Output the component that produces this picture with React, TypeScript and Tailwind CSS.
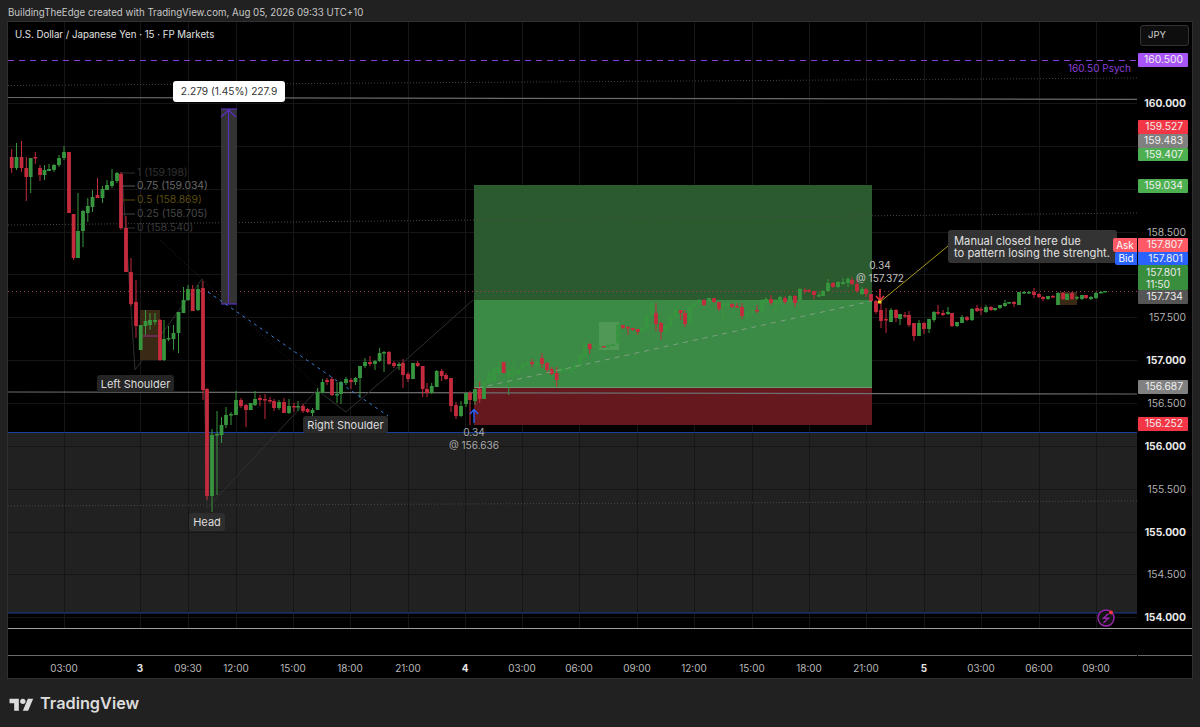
import React from "react";

// [colour 0 green / 1 red, x, bodyTop, bodyBottom, wickTop, wickBottom]
const candles: number[][] = [
  [1,11.7,157,168,149,173],[0,16.5,157,168,143,170],[1,21.5,157,168,141,172],[1,26.3,168,177,157,201],[0,30.7,158,177,158,193],[1,35.3,157,158,152,164],
  [1,40,168,175,165,181],[0,44.5,170,175,165,180],[0,49,169,171,164,171],[0,54,165,170,164,172],[0,59,158,165,155,167],[0,64,152,158,146,160],
  [1,69,152,213,152,213],[1,73.6,214,258,214,260],[0,78,231,258,193,258],[0,83,211,231,210,247],[0,87.8,206,213,198,222],[0,92.5,197,207,190,212],
  [1,97.5,195,198,178,198],[0,102.5,189,198,186,203],[0,107,185,190,180,190],[0,112,181,186,169,188],[0,117,173,181,172,183],[1,121,174,228,172,230],
  [1,126,228,272,216,272],[1,131,272,304,258,306],[1,136,302,326,280,338],[0,140.7,325,350,325,350],[0,145.5,321,326,310,335],[0,150,320,325,313,330],
  [0,155,320,322,313,325],[1,160,320,360,319,361],[0,164,339,360,320,361],[0,168.5,338,339,326,341],[0,173.5,333,339,325,350],[0,178.5,312,333,312,353],
  [0,183.5,300,313,287,313],[0,188,289,300,285,301],[1,192.7,289,311,285,311],[0,198,289,310,285,311],[1,203,288,390,281,400],[1,207,389,496,388,500],
  [0,212,435,496,429,512],[0,217,434,435,411,495],[0,221.5,425,435,417,443],[0,226,415,425,407,428],[0,231,414,415,412,425],[0,236,400,415,391,415],
  [1,241,400,406,398,408],[1,246,405,410,404,427],[0,250.7,403,410,403,410],[0,255,399,405,391,406],[1,260,398,400,395,406],[1,265,399,400,394,419],
  [1,270,400,401,397,403],[1,274,401,408,399,411],[0,279,402,408,400,410],[1,284,402,413,398,413],[0,289,406,413,399,414],[1,294,406,407,403,412],
  [0,298,406,407,401,411],[1,303,406,411,404,413],[1,307.6,409,412,408,413],[0,312.5,410,413,408,417],[0,317.6,392,410,388,410],[0,322.5,382,393,379,393],
  [1,327,380,382,378,385],[1,332,379,395,377,396],[0,337,394,395,382,403],[0,341,382,394,381,404],[0,346,379,383,377,385],[1,351,380,382,378,389],
  [0,355.5,378,382,377,385],[0,360,366,378,366,398],[0,365,362,366,358,368],[1,370,362,364,356,366],[0,375,361,364,360,370],[0,379.6,353,361,348,362],
  [0,384,352,353,351,372],[1,389,352,364,351,365],[1,394,363,366,361,368],[0,399,364,366,362,370],
  [1,403,363,375,359,388],[1,408,374,379,372,382],[0,413,363,379,363,379],[1,417.7,363,366,361,367],[1,422.7,366,389,366,397],[1,427,389,393,383,397],
  [0,431.7,386,393,383,394],[0,436.7,371,387,370,387],[1,441.7,371,376,369,381],[1,446,375,379,373,380],[1,451,378,406,378,412],[1,456,405,416,402,419],
  [0,461,406,416,401,417],[0,466,393,404,393,407],[1,470,393,400,391,425],[0,475,389,401,389,405],[1,479.7,389,399,382,403],[0,484,382,399,380,399],
  [0,489,373,383,371,384],[0,494,368,381,366,382],[0,499,367,373,357,375],[1,503.7,362,373,362,373],[0,508.7,370,377,370,395],[0,513,372,375,363,380],
  [0,518,370,374,369,375],[0,522.7,364,369,363,370],[0,527,363,365,362,366],[1,532,362,364,359,367],[0,537,362,366,361,367],[1,542,358,364,353,368],
  [1,547,363,370,362,373],[1,551.7,369,374,367,375],[1,556.7,373,380,367,387],[0,561.7,368,372,367,373],[0,565.7,369,371,368,372],[0,570.7,368,372,367,373],
  [0,575,364,369,363,370],[0,580,355,365,354,366],[0,585,344,357,343,358],[1,589.7,344,349,343,354],[0,594,345,347,344,348],[0,599,346,347,345,348],
  [1,603.7,346,347,346,347],[0,608,345,347,344,348],[0,613,344,346,343,347],[0,618,325,343,324,344],[1,623,325,328,325,329],[1,628,327,328,326,335],
  [1,632.7,328,330,328,331],[1,637.7,329,332,329,335],[0,642,328,332,326,333],[0,646.7,315,329,314,330],[0,651.7,303,315,302,316],[1,656,313,324,303,331],
  [1,661,323,332,322,340],[0,666,325,332,324,333],[0,670.7,317,326,316,327],[0,675.7,309,317,308,318],[1,680.7,310,313,310,320],[1,685,313,324,310,327],
  [0,690,307,324,306,325],[0,694,303,307,302,308],[0,699,300,303,299,304],[1,704,300,305,299,306],[0,709,298,302,298,303],[1,714,298,302,298,303],
  [1,719,302,309,302,311],[0,723,303,307,303,323],[0,728,304,306,303,307],[1,732,304,307,303,308],[1,737,306,307,303,308],[1,742,307,316,303,319],
  [0,747,313,316,312,317],[0,752,310,313,309,314],[1,757,310,311,305,313],[0,762,300,311,299,312],[0,766,299,303,297,305],[1,771,299,303,295,305],
  [0,776,300,304,299,313],[0,780,297,303,296,304],[1,785,298,302,296,304],[0,790,296,303,295,305],[1,795,296,303,295,307],[0,800,289,300,288,301],
  [1,805,290,291,288,294],[1,809,290,291,289,293],[1,814,291,295,291,299],[0,819,295,296,292,297],[0,823,291,296,290,296],[0,828,283,291,279,292],
  [1,833,283,287,282,288],[0,838,282,287,281,288],[0,843,282,284,278,285],[0,848,279,283,277,287],[1,852,280,284,277,285],[1,857,284,291,279,293],
  [0,862,289,294,287,295],[1,866,289,294,288,297],[1,871,294,301,294,302],[1,876,301,312,300,314],[1,881,310,321,303,328],[1,886,319,320,308,333],
  [0,891,310,322,308,322],[1,896,310,318,309,322],[0,900,314,319,314,325],[1,905,315,316,312,318],[1,909,315,325,311,327],[1,914,323,336,323,341],
  [0,919,323,336,320,336],[1,924,323,329,322,334],[0,929,319,329,319,333],[0,934,312,320,311,322],[1,938,312,313,305,315],[1,943,313,315,310,316],
  [0,948,312,314,307,315],[1,952,313,326,313,327],[0,957,322,326,322,327],[0,962,317,323,315,323],[1,967,317,320,316,321],[0,972,309,320,308,321],
  [1,977,308,311,305,312],[1,981,309,310,307,315],[0,986,307,312,305,313],[1,991,307,310,306,311],[0,995,308,310,308,311],[0,1000,305,308,305,309],
  [0,1005,303,306,300,307],[0,1009,302,303,302,304],[1,1014,302,304,301,307],[0,1019,292,305,292,305],[0,1024,292,293,291,294],[0,1029,292,293,291,294],
  [1,1034,292,295,288,298],[1,1039,294,297,293,298],[1,1043,297,299,296,301],[0,1048,296,299,296,300],[1,1053,296,297,295,298],[0,1058,293,305,292,305],
  [1,1063,293,299,292,300],[0,1067,294,300,293,300],[1,1072,293,299,292,300],[0,1077,297,298,296,300],[0,1082,295,299,295,300],[1,1086,295,298,295,299],
  [0,1091,297,299,296,300],[0,1096,293,298,292,299],[0,1101,292,293,291,293],[0,1105,291,292,291,292],
];

const gridX = [64,140,188,236,293,350,408,465,522,579,637,694,752,809,866,924,981,1039,1096];
const gridY = [103.5,146.5,189.5,232.5,274.5,317.5,360.5,403.5,446.5,489.5,532.5,574.5,617.5];

const axisTicks = [
  { t: "160.000", y: 102.5, b: true },{ t: "158.500", y: 231.5 },{ t: "157.500", y: 316.5 },{ t: "157.000", y: 359.5, b: true },
  { t: "156.500", y: 402.5 },{ t: "156.000", y: 445.5, b: true },{ t: "155.500", y: 488.5 },{ t: "155.000", y: 531.5, b: true },
  { t: "154.500", y: 573.5 },{ t: "154.000", y: 616.5, b: true },
];

const priceTags = [
  { t: "160.500", y: 53, h: 14, c: "#a855f7" },{ t: "159.527", y: 120, h: 14, c: "#f23645" },{ t: "159.483", y: 134, h: 14, c: "#808080" },
  { t: "159.407", y: 148, h: 13, c: "#4caf50" },{ t: "159.034", y: 179, h: 14, c: "#4caf50" },{ t: "157.807", y: 238, h: 14, c: "#ff5a65" },
  { t: "157.801", y: 252, h: 13, c: "#2962ff" },{ t: "157.734", y: 290, h: 14, c: "#555555" },{ t: "156.687", y: 380, h: 14, c: "#808080" },
  { t: "156.252", y: 417, h: 14, c: "#f23645" },
];

const timeLabels = [
  { t: "03:00", x: 64 },{ t: "3", x: 140, b: true },{ t: "09:30", x: 188 },{ t: "12:00", x: 236 },{ t: "15:00", x: 293 },{ t: "18:00", x: 350 },
  { t: "21:00", x: 408 },{ t: "4", x: 465, b: true },{ t: "03:00", x: 522 },{ t: "06:00", x: 579 },{ t: "09:00", x: 637 },{ t: "12:00", x: 694 },
  { t: "15:00", x: 752 },{ t: "18:00", x: 809 },{ t: "21:00", x: 866 },{ t: "5", x: 924, b: true },{ t: "03:00", x: 981 },{ t: "06:00", x: 1039 },{ t: "09:00", x: 1096 },
];

const fibs = [
  { t: "1 (159.198)", y: 173, c: "#333333" },{ t: "0.75 (159.034)", y: 186, c: "#6a6a6a" },{ t: "0.5 (158.869)", y: 200, c: "#5c4c10" },
  { t: "0.25 (158.705)", y: 214, c: "#484848" },{ t: "0 (158.540)", y: 228, c: "#3a3a3a" },
];

function ChartDrawing() {
  return (
    <svg width="1129" height="606" viewBox="8 22 1129 606" className="absolute inset-0 block">
      <rect x="8" y="432" width="1129" height="181" fill="#212121" />
      {gridX.map((x) => (<line key={x} x1={x + 0.5} x2={x + 0.5} y1="22" y2="628" stroke="#161616" />))}
      {gridY.map((y) => (<line key={y} x1="8" x2="1137" y1={y} y2={y} stroke="#161616" />))}
      <rect x="474" y="185" width="398" height="115" fill="#2b5a2f" />
      <rect x="474" y="300" width="398" height="87" fill="#3b8a45" />
      <rect x="474" y="387" width="398" height="38" fill="#65191f" />
      <line x1="474" x2="872" y1="387.5" y2="387.5" stroke="#6f9a70" />
      <rect x="599" y="322" width="20" height="28" fill="#4f9855" />
      <line x1="8" x2="1137" y1="60.5" y2="60.5" stroke="#8a3fd6" strokeDasharray="6 5" />
      <line x1="8" x2="1137" y1="85.5" y2="78" stroke="#444" strokeDasharray="1 2" />
      <line x1="8" x2="1137" y1="97.5" y2="99.3" stroke="#6a6a6a" strokeWidth="1.2" />
      <line x1="8" x2="1137" y1="225" y2="213" stroke="#4a4a4a" strokeDasharray="1 2" />
      <line x1="8" x2="1137" y1="291.5" y2="291.5" stroke="#a33a45" strokeDasharray="1 3" />
      <line x1="8" x2="1137" y1="392" y2="394" stroke="#6e6e6e" strokeWidth="1.2" />
      <line x1="8" x2="1137" y1="506" y2="501" stroke="#4a4a4a" strokeDasharray="1 2" />
      <line x1="8" x2="1137" y1="432.5" y2="432.5" stroke="#1c3f9c" />
      <line x1="8" x2="1137" y1="613" y2="613" stroke="#1c3f9c" />
      <polyline points="122,172 135,370 177,313 202,279 207,508 317,390 346,412 398,367 473,300" fill="none" stroke="#303030" />
      <line x1="160" y1="240" x2="205" y2="282" stroke="#2a2a2a" strokeDasharray="1 2" />
      <line x1="205" y1="282" x2="345" y2="412" stroke="#222" strokeDasharray="1 2" />
      <rect x="140" y="310" width="20" height="50" fill="#3a2a15" />
      <rect x="1060" y="292" width="17" height="13" fill="#3a2a15" />
      {[173, 186, 200, 214, 228].map((y, i) => (
        <line key={y} x1="122" x2="135" y1={y} y2={y} stroke={["#2e2e2e", "#5c5c5c", "#5c4c10", "#444", "#333"][i]} />
      ))}
      <rect x="221" y="109" width="16" height="195" fill="#333333" />
      {candles.map(([c, x, t, b, wt, wb], i) => (
        <g key={i} fill={c ? "#c42b3c" : "#38953f"}>
          <rect x={x - 0.5} y={wt} width="1" height={Math.max(wb - wt, 1)} />
          <rect x={x - 1.9} y={t} width="3.8" height={Math.max(b - t, 1.5)} />
        </g>
      ))}
      <line x1="143" x2="158" y1="336" y2="336" stroke="#7a2f60" strokeWidth="1.5" />
      <line x1="228.5" x2="228.5" y1="110" y2="303" stroke="#5b2fc4" strokeWidth="1.2" />
      <line x1="221" x2="237" y1="109" y2="109" stroke="#5b2fc4" strokeWidth="1.2" />
      <line x1="221" x2="237" y1="304" y2="304" stroke="#5b2fc4" strokeWidth="1.2" />
      <polyline points="221,117 228.5,110 236,117" fill="none" stroke="#5b2fc4" strokeWidth="1.2" />
      <line x1="208" y1="292" x2="388" y2="416" stroke="#3b7fd4" strokeDasharray="3 4" />
      <line x1="478" y1="388" x2="872" y2="301" stroke="#9aa99a" strokeOpacity="0.7" strokeDasharray="5 5" />
      <path d="M474 423V410M470 414l4-4.500 4 4.500" fill="none" stroke="#2962ff" strokeWidth="1.4" />
      <path d="M880 289V300M876 296l4 4.500 4-4.500" fill="none" stroke="#f23645" strokeWidth="1.4" />
      <line x1="880" y1="302" x2="948" y2="246" stroke="#a89a20" />
      <rect x="878" y="300.500" width="3.500" height="3" fill="#f0d020" />
      <circle cx="1106" cy="618" r="8" fill="#141414" stroke="#9c27b0" strokeWidth="1.4" />
      <path d="M1108.500 613.500l-5 4.800h5l-5 4.500" fill="none" stroke="#9c27b0" strokeWidth="1.4" />
      <circle cx="1111" cy="612.500" r="2" fill="#f23645" />
    </svg>
  );
}

export default function App() {
  return (
    <div className="flex h-[727px] w-[1200px] flex-col overflow-hidden bg-[#212121] font-['Inter',sans-serif] text-[#d8d8d8]">
      <div className="flex h-[21px] items-center pl-2 pt-[5px] text-[9.700px] leading-none text-[#c8c8c8]">
        BuildingTheEdge created with TradingView.com, Aug 05, 2026 09:33 UTC+10
      </div>

      <div className="mx-[7px] flex h-[658px] flex-col border border-[#303030] bg-black">
        <div className="flex h-[606px]">
          <div className="relative h-[606px] w-[1129px] overflow-hidden">
            <ChartDrawing />
            <div className="absolute left-[7px] top-[6px] text-[9.700px] leading-[14px] text-[#e0e0e0]">
              U.S. Dollar / Japanese Yen · 15 · FP Markets
            </div>
            <div className="absolute right-[6px] top-[39px] text-[10px] leading-[14px] text-[#8a3fd6]">160.50 Psych</div>
            <div className="absolute left-[165px] top-[59px] flex h-[21px] w-[112px] items-center justify-center rounded-[3px] bg-white text-[10.200px] text-[#333333]">
              2.279 (1.45%) 227.9
            </div>
            {fibs.map((f) => (
              <div key={f.t} className="absolute left-[129px] whitespace-nowrap text-[10.400px] leading-[14px]" style={{ top: f.y - 29, color: f.c }}>
                {f.t}
              </div>
            ))}
            <div className="absolute left-[89px] top-[353px] flex h-[17px] w-[77px] items-center justify-center rounded-[3px] bg-[#242424] pt-px text-[11px] text-[#dddddd]">Left Shoulder</div>
            <div className="absolute left-[181px] top-[491px] flex h-[18px] w-[36px] items-center justify-center rounded-[3px] bg-[#2e2e2e] pt-px text-[11px] text-[#dddddd]">Head</div>
            <div className="absolute left-[295px] top-[394px] flex h-[17px] w-[85px] items-center justify-center rounded-[3px] bg-[#2a2a2a] pt-px text-[11px] text-[#dddddd]">Right Shoulder</div>
            <div className="absolute left-[426px] top-[404px] w-[80px] text-center text-[10.100px] leading-[12.500px] text-[#a8a8a8]">
              <div>0.34</div>
              <div>@ 156.636</div>
            </div>
            <div className="absolute left-[832px] top-[237px] w-[80px] text-center text-[10.100px] leading-[12.500px] text-[#c0c0c0]">
              <div>0.34</div>
              <div>@ 157.372</div>
            </div>
            <div className="absolute left-[940px] top-[208px] h-[33px] w-[169px] rounded-[3px] bg-[#333333] pl-[6px] pt-[5px] text-[11.200px] leading-[12px] text-[#e0e0e0]">
              <div>Manual closed here due</div>
              <div className="whitespace-nowrap">to pattern losing the strenght.</div>
            </div>
            <div className="absolute left-[1105px] top-[216px] flex h-[14px] w-[24px] items-center justify-center rounded-l-[2px] bg-[#ff5a65] text-[10px] text-white">Ask</div>
            <div className="absolute left-[1107px] top-[230px] flex h-[13px] w-[22px] items-center justify-center rounded-l-[2px] bg-[#2962ff] text-[10px] text-white">Bid</div>
          </div>

          <div className="relative flex-1 bg-black pl-[3px] pt-[3px]">
            <div className="flex h-[21px] w-[49px] items-center rounded-[3px] border border-[#333333] bg-[#0e0e0e] pl-[7px] text-[9.500px] text-[#d0d0d0]">JPY</div>
            {axisTicks.map((a) => (
              <div
                key={a.t}
                className={`absolute left-0 w-[49px] text-right text-[10.300px] leading-[14px] ${a.b ? "font-bold text-[#e8e8e8]" : "text-[#b0b0b0]"}`}
                style={{ top: a.y - 22 - 7 }}
              >
                {a.t}
              </div>
            ))}
            {priceTags.map((p) => (
              <div
                key={p.t + p.y}
                className="absolute left-px flex w-[50px] items-center justify-end rounded-[1px] pr-[5px] text-[10.300px] text-[#f0f0f0]"
                style={{ top: p.y - 22, height: p.h, background: p.c }}
              >
                {p.t}
              </div>
            ))}
            <div className="absolute left-px top-[243px] flex h-[25px] w-[50px] flex-col justify-center rounded-[1px] bg-[#388e3c] pl-[8px] text-[10.300px] leading-[12px] text-[#e8e8e8]">
              <div>157.801</div>
              <div>11:50</div>
            </div>
          </div>
        </div>

        <div className="h-px bg-[#a0a0a0]" />
        <div className="h-[26px]" />
        <div className="flex h-px gap-px">
          <div className="w-[1129px] bg-[#6a6a6a]" />
          <div className="flex-1 bg-[#6a6a6a]" />
        </div>
        <div className="relative flex-1">
          {timeLabels.map((l) => (
            <div
              key={l.t + l.x}
              className={`absolute top-[5px] w-[40px] text-center text-[9.900px] leading-[14px] ${l.b ? "font-bold text-[#e8e8e8]" : "text-[#b8b8b8]"}`}
              style={{ left: l.x - 8 - 20 }}
            >
              {l.t}
            </div>
          ))}
        </div>
      </div>

      <div className="flex flex-1 items-center gap-[6px] pl-[9px]">
        <svg width="25" height="16" viewBox="0 0 36 24" fill="#dcdcdc" className="mt-[1px]">
          <path d="M14 22H7V11H0V4h14v18zM28 22h-8l7.500-18h8L28 22z" />
          <circle cx="20" cy="8" r="4" />
        </svg>
        <span className="text-[16.300px] font-semibold leading-none text-[#dcdcdc]">TradingView</span>
      </div>
    </div>
  );
}
